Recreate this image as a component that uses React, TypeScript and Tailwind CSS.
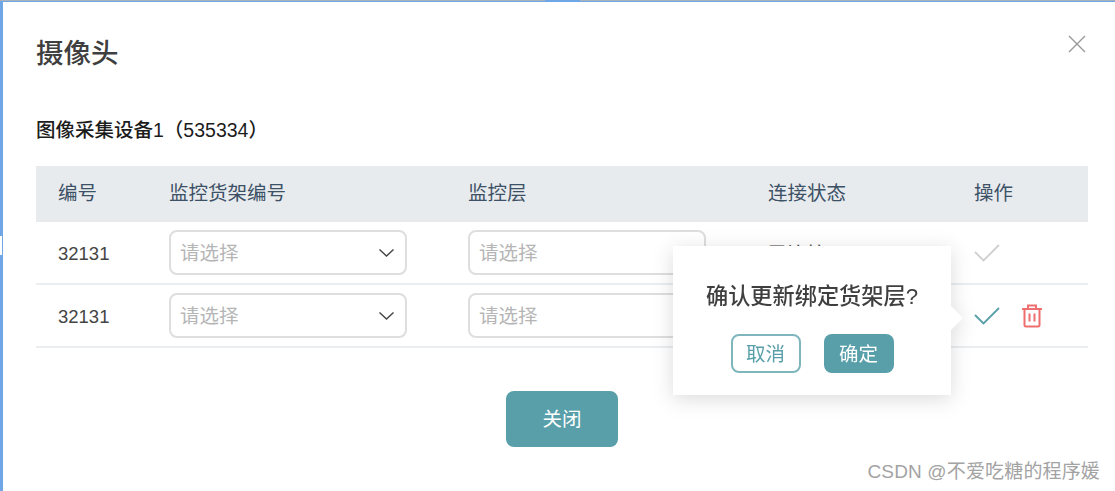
import React, { FC } from 'react';

const font = "font-['Liberation_Sans','Noto_Sans_CJK_SC',sans-serif]";

const Select: FC<{ arrow?: boolean }> = ({ arrow }) => (
  <div className="w-[238px] h-[45px] flex items-center justify-between pl-[9px] pr-[11px] border-2 border-[#dedede] rounded-[8px] bg-white">
    <span className="text-[19.5px] leading-[28px] pt-[1px] text-[#b5b5b5]">请选择</span>
    {arrow && (
      <svg width="15" height="8" viewBox="0 0 15 8" fill="none" stroke="#444" strokeWidth="1.4">
        <path d="M0.5 0.5 L7.5 7 L14.5 0.5" />
      </svg>
    )}
  </div>
);

const Check: FC<{ color: string }> = ({ color }) => (
  <svg width="26" height="18" viewBox="0 0 26 18" fill="none" stroke={color} strokeWidth="1.8">
    <path d="M1 8 L9.5 16.5 L25 1" />
  </svg>
);

const Trash: FC = () => (
  <svg width="22" height="24" viewBox="0 0 22 24" fill="none" stroke="#ee6f6f" strokeWidth="2">
    <path d="M1 5 H21 M7 5 V1.5 H15 V5 M3.5 5 V21 Q3.5 22.5 5 22.5 H17 Q18.5 22.5 18.5 21 V5 M8.5 9.5 V17.5 M13.5 9.5 V17.5" />
  </svg>
);

const Row: FC<{ status?: string; action: React.ReactNode }> = ({ status, action }) => (
  <div className="grid grid-cols-[133px_299px_300px_206px_1fr] items-center h-[63px] border-b-2 border-[#ebeef0]">
    <div className="pl-[22px] pt-[2px] text-[18.5px] text-[#444]">32131</div>
    <Select arrow />
    <Select />
    <div className="text-[19.5px] leading-[28px] pt-[3px] text-[#444]">{status}</div>
    <div className="flex items-center gap-[21px]">{action}</div>
  </div>
);

export default function App() {
  return (
    <div className={`${font} relative w-[1115px] h-[491px] bg-white border-t-2 border-l-[3px] border-[#6ea6e6]`}>
      {/* edge of the page behind the dialog */}
      <div className="absolute -top-[2px] -left-[3px] w-[545px] h-px bg-[#a9b1ba]" />
      <div className="absolute -top-[2px] left-[577px] right-0 h-px bg-[#a9b1ba]" />
      <div className="absolute top-[234px] -left-[3px] w-[2px] h-[19px] bg-white" />

      <div className="pl-[33px] pr-[27px]">
        <div className="flex items-start justify-between pt-[33px]">
          <h1 className="text-[27.5px] leading-[38px] font-medium text-[#3f3f3f]">摄像头</h1>
          <svg className="mr-[2px]" width="18" height="18" viewBox="0 0 18 18" stroke="#999" strokeWidth="1.4">
            <path d="M1 1 L17 17 M17 1 L1 17" />
          </svg>
        </div>
        <h2 className="mt-[41px] text-[19.5px] leading-[32px] font-medium text-[#1c1c1c]">图像采集设备1（535334）</h2>
        <div className="mt-[20px] grid grid-cols-[133px_299px_300px_206px_1fr] items-center h-[56px] bg-[#e8ebee] text-[19.5px] text-[#3d5166]">
          <div className="pl-[22px]">编号</div>
          <div>监控货架编号</div>
          <div>监控层</div>
          <div>连接状态</div>
          <div>操作</div>
        </div>
        <Row status="已连接" action={<Check color="#cfcfcf" />} />
        <Row action={<><Check color="#589fa9" /><Trash /></>} />
        <div className="flex justify-center mt-[43px]">
          <button className="w-[112px] h-[56px] pt-[1px] rounded-[8px] bg-[#589fa9] text-white text-[19.5px]">关闭</button>
        </div>
      </div>

      <div className="absolute left-[670px] top-[244px] w-[278px] h-[149px] bg-white drop-shadow-[0_4px_10px_rgba(0,0,0,0.14)] flex flex-col items-center pt-[36px]">
        <div className="text-[22.2px] leading-[30px] font-medium text-[#3f3f3f]">确认更新绑定货架层?</div>
        <div className="flex gap-[23px] mt-[22px]">
          <button className="w-[70px] h-[39px] pt-[2px] rounded-[8px] border-2 border-[#7fb6be] text-[#589fa9] text-[19.5px]">取消</button>
          <button className="w-[70px] h-[39px] pt-[2px] rounded-[8px] bg-[#589fa9] text-white text-[19.5px]">确定</button>
        </div>
        <div className="absolute right-[-12px] top-[60px] w-0 h-0 border-y-[12px] border-y-transparent border-l-[12px] border-l-white" />
      </div>

      <div className="absolute right-[15px] bottom-[7px] text-[19px] leading-[24px] tracking-[0.15px] text-[#a3a3a3]">CSDN @不爱吃糖的程序媛</div>
    </div>
  );
}
